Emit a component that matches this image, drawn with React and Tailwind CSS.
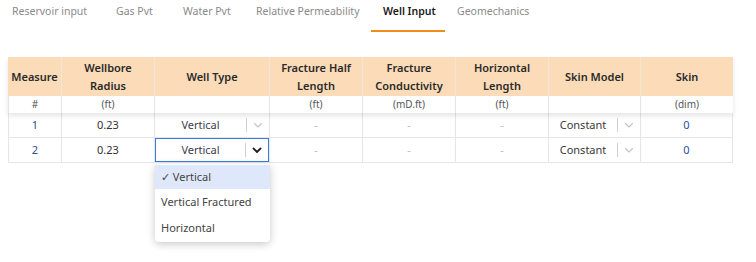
import React from 'react'

const tabs = [
  ['Reservoir input', 'w-[104px]'],
  ['Gas Pvt', 'w-[67px]'],
  ['Water Pvt', 'w-[73px]'],
  ['Relative Permeability', 'w-[127px]'],
  ['Well Input', 'w-[74px]'],
  ['Geomechanics', 'w-[100px]'],
]

const cols = 'grid grid-cols-[54px_93px_115px_93px_93px_93px_92px_92px]'

const Chevron = ({ dark }) => (
  <svg width="12" height="12" viewBox="0 0 12 12" fill="none">
    <path
      d="M2.5 4.5 6 8l3.5-3.5"
      stroke={dark ? '#222' : '#c4c4c4'}
      strokeWidth={dark ? 1.8 : 1.1}
      strokeLinecap="round"
      strokeLinejoin="round"
    />
  </svg>
)

const Select = ({ value, active }) => (
  <div
    className={`flex h-full items-center ${
      active ? 'border border-[#3b7be0]' : ''
    }`}
  >
    <div className="flex-1 text-center">{value}</div>
    <div className="h-[14px] w-px bg-[#d0d0d0]" />
    <div className="flex w-[22px] items-center justify-center">
      <Chevron dark={active} />
    </div>
  </div>
)

const Row = ({ n, active }) => (
  <div className={`${cols} h-[25px] border-b border-[#e6e6e6]`}>
    <div className="flex items-center justify-center border-r border-l border-[#e6e6e6] text-[#2d4f8a]">
      {n}
    </div>
    <div className="flex items-center justify-center border-r border-[#e6e6e6] text-[#3a3030]">
      0.23
    </div>
    <div className="relative border-r border-[#e6e6e6] text-[#3c3c4e]">
      <Select value="Vertical" active={active} />
      {active && (
        <div className="absolute top-[26px] left-0 z-20 w-[115px] rounded-[4px] bg-white py-[1px] text-[#444] shadow-[0_2px_8px_rgba(0,0,0,0.22)]">
          <div className="flex h-[24px] items-center bg-[#dfe8fa] px-[6px]">
            ✓ Vertical
          </div>
          <div className="flex h-[26px] items-center px-[6px]">
            Vertical Fractured
          </div>
          <div className="flex h-[26px] items-center px-[6px]">Horizontal</div>
        </div>
      )}
    </div>
    <div className="flex items-center justify-center border-r border-[#e6e6e6] text-[#bbb]">
      -
    </div>
    <div className="flex items-center justify-center border-r border-[#e6e6e6] text-[#bbb]">
      -
    </div>
    <div className="flex items-center justify-center border-r border-[#e6e6e6] text-[#bbb]">
      -
    </div>
    <div className="border-r border-[#e6e6e6] text-[#3a3a3a]">
      <Select value="Constant" />
    </div>
    <div className="flex items-center justify-center border-r border-[#e6e6e6] text-[#1f4fa0]">
      0
    </div>
  </div>
)

const App = () => {
  const heads = [
    ['Measure'],
    ['Wellbore', 'Radius'],
    ['Well Type'],
    ['Fracture Half', 'Length'],
    ['Fracture', 'Conductivity'],
    ['Horizontal', 'Length'],
    ['Skin Model'],
    ['Skin'],
  ]
  const units = ['#', '(ft)', '', '(ft)', '(mD.ft)', '(ft)', '', '(dim)']

  return (
    <div className="h-[262px] w-[756px] bg-white font-['Noto_Sans',sans-serif] text-[11px]">
      <div className="flex h-[32px]">
        {tabs.map(([t, w]) => {
          const active = t === 'Well Input'
          return (
            <div
              key={t}
              className={`flex h-full shrink-0 items-start pt-[4px] pl-3 text-[10.5px] whitespace-nowrap ${w} ${
                active
                  ? 'border-b-2 border-[#f08c1e] font-semibold text-[#1a1a1a]'
                  : 'text-[#8a8a8a]'
              }`}
            >
              {t}
            </div>
          )
        })}
      </div>

      <div className="mt-[25px] ml-[8px] w-[725px]">
        <div className="relative z-10 shadow-[0_3px_5px_rgba(0,0,0,0.1)]">
          <div
            className={`${cols} h-[39px] bg-[#fbdbb8] leading-[18px] font-semibold text-[#2a2a2a]`}
          >
            {heads.map((h, i) => (
              <div
                key={i}
                className="flex flex-col items-center justify-center border-r border-[#f2e6d9] text-center last:border-r-0"
              >
                {h.map((l) => (
                  <span key={l}>{l}</span>
                ))}
              </div>
            ))}
          </div>
          <div className={`${cols} h-[17px] bg-white text-[10px] text-[#555]`}>
            {units.map((u, i) => (
              <div
                key={i}
                className="flex items-center justify-center border-r border-[#e6e6e6] first:border-l last:border-r-0"
              >
                {u}
              </div>
            ))}
          </div>
        </div>
        <Row n="1" />
        <Row n="2" active />
      </div>
    </div>
  )
}

export default App
